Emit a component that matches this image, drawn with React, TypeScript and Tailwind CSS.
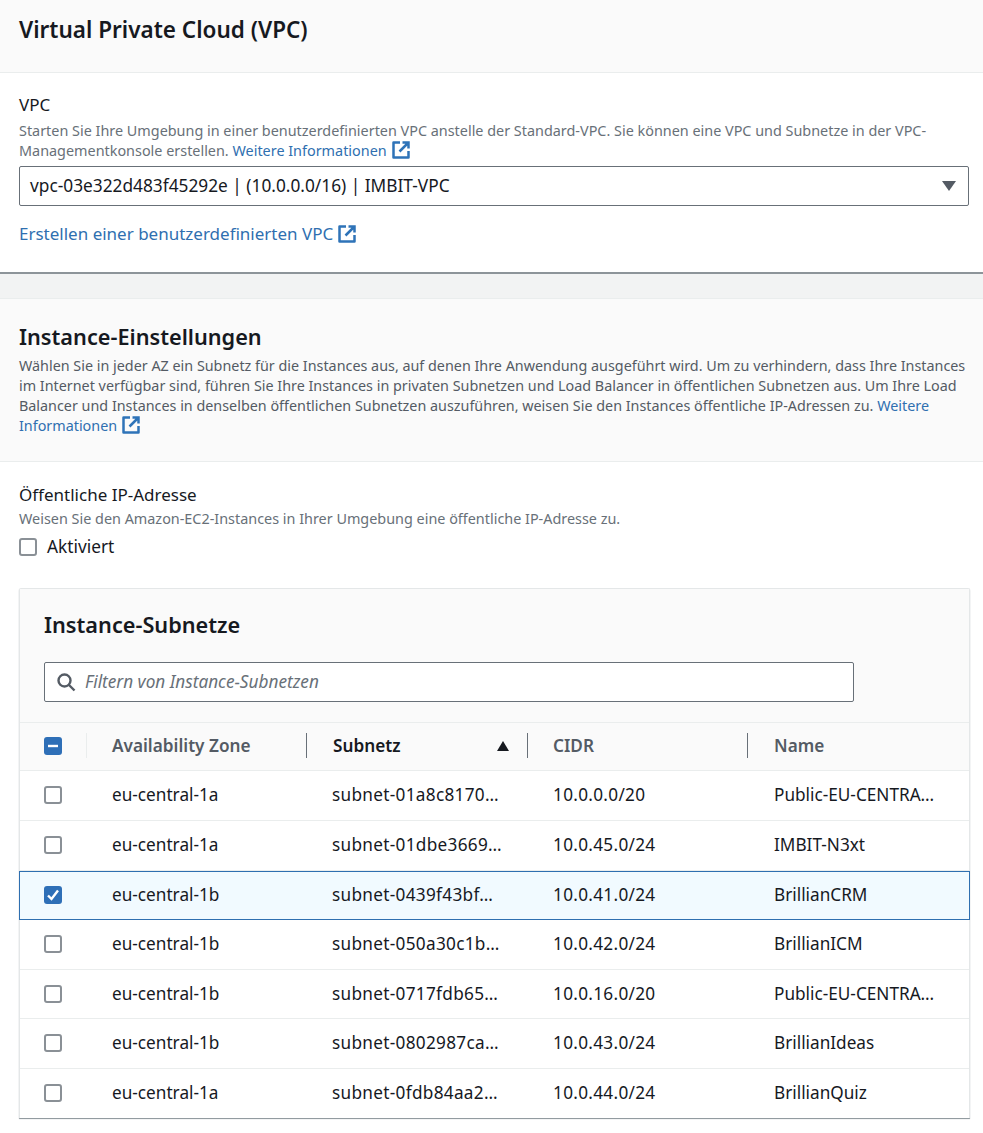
import React from "react";

const ExternalIcon: React.FC<{ size?: number }> = ({ size = 18 }) => (
    <svg width={size} height={size} viewBox="0 0 18 18" fill="none" stroke="#2e73b8" strokeWidth="2.5" className="inline-block align-[-3px] ml-[5px]">
        <path d="M8 1.5H1.5v15h15V10" strokeLinejoin="round" />
        <path d="M10.5 1.5h6V7.5M16.5 1.5 7.5 10.5" />
    </svg>
);

const Checkbox: React.FC<{ state?: "off" | "on" | "mixed" }> = ({ state = "off" }) => {
    if (state === "off") {
        return <span className="block w-[18px] h-[18px] rounded-[3px] border-2 border-[#8a9096] bg-white"></span>;
    }
    return (
        <span className="flex items-center justify-center w-[18px] h-[18px] rounded-[3px] bg-[#2e6fb7]">
            <svg width="18" height="18" viewBox="0 0 18 18" fill="none" stroke="#fff" strokeWidth="2.4">
                {state === "on" ? <path d="M4 9.5 7.5 13 14 4.5" /> : <path d="M4 9h10" />}
            </svg>
        </span>
    );
};

const rows = [
    { zone: "eu-central-1a", subnet: "subnet-01a8c8170…", cidr: "10.0.0.0/20", name: "Public-EU-CENTRA…", height: "h-[50px]" },
    { zone: "eu-central-1a", subnet: "subnet-01dbe3669…", cidr: "10.0.45.0/24", name: "IMBIT-N3xt", height: "h-[50px]" },
    { zone: "eu-central-1b", subnet: "subnet-0439f43bf…", cidr: "10.0.41.0/24", name: "BrillianCRM", height: "h-[49px]", selected: true },
    { zone: "eu-central-1b", subnet: "subnet-050a30c1b…", cidr: "10.0.42.0/24", name: "BrillianICM", height: "h-[50px]" },
    { zone: "eu-central-1b", subnet: "subnet-0717fdb65…", cidr: "10.0.16.0/20", name: "Public-EU-CENTRA…", height: "h-[49px]" },
    { zone: "eu-central-1b", subnet: "subnet-0802987ca…", cidr: "10.0.43.0/24", name: "BrillianIdeas", height: "h-[50px]" },
    { zone: "eu-central-1a", subnet: "subnet-0fdb84aa2…", cidr: "10.0.44.0/24", name: "BrillianQuiz", height: "h-[49px]" },
];

const App: React.FC = () => {
    return (
        <div className="w-[983px] h-[1133px] overflow-hidden bg-white text-[#16191f] font-['Noto_Sans',sans-serif]">
            <div className="h-[73px] bg-[#fafafa] border-b border-[#eaeded] px-[19px] pt-[15px]">
                <h2 className="text-[22.5px] leading-[30px] font-semibold">Virtual Private Cloud (VPC)</h2>
            </div>

            <div className="h-[201px] border-b-2 border-[#8d9499] pl-[19px] pr-[14px] pt-[21px]">
                <div className="text-[17px] leading-[22px]">VPC</div>
                <p className="text-[14.4px] leading-[20px] mt-[5px] text-[#687078]">
                    Starten Sie Ihre Umgebung in einer benutzerdefinierten VPC anstelle der Standard-VPC. Sie können eine VPC und Subnetze in der VPC-Managementkonsole erstellen. <span className="text-[#2f6fb0]">Weitere Informationen</span><ExternalIcon />
                </p>
                <div className="flex items-center justify-between h-[40px] mt-[5px] pl-[10px] pr-[12px] border border-[#687078] rounded-[2px] text-[17.3px]">
                    <span>vpc-03e322d483f45292e | (10.0.0.0/16) | IMBIT-VPC</span>
                    <span className="w-0 h-0 border-x-[7px] border-x-transparent border-t-[10px] border-t-[#545b64]"></span>
                </div>
                <div className="mt-[16px] text-[17px] leading-[24px] text-[#2f6fb0]">
                    Erstellen einer benutzerdefinierten VPC<ExternalIcon />
                </div>
            </div>

            <div className="h-[25px] bg-[#f2f3f3] border-b border-[#eaeded]"></div>

            <div className="h-[163px] bg-[#fafafa] border-b border-[#eaeded] pl-[19px] pr-[14px] pt-[23px]">
                <h2 className="text-[21.7px] leading-[30px] font-semibold">Instance-Einstellungen</h2>
                <p className="text-[14.35px] leading-[20px] mt-[4px] text-[#545b64]">
                    Wählen Sie in jeder AZ ein Subnetz für die Instances aus, auf denen Ihre Anwendung ausgeführt wird. Um zu verhindern, dass Ihre Instances im Internet verfügbar sind, führen Sie Ihre Instances in privaten Subnetzen und Load Balancer in öffentlichen Subnetzen aus. Um Ihre Load Balancer und Instances in denselben öffentlichen Subnetzen auszuführen, weisen Sie den Instances öffentliche IP-Adressen zu. <span className="text-[#2f6fb0]">Weitere Informationen</span><ExternalIcon />
                </p>
            </div>

            <div className="px-[19px] pt-[22px]">
                <div className="text-[17px] leading-[22px]">Öffentliche IP-Adresse</div>
                <p className="text-[14.4px] leading-[20px] mt-[3px] text-[#687078]">Weisen Sie den Amazon-EC2-Instances in Ihrer Umgebung eine öffentliche IP-Adresse zu.</p>
                <label className="flex items-center gap-[10px] mt-[6px] h-[24px] text-[17.3px]">
                    <Checkbox />
                    Aktiviert
                </label>

                <div className="mt-[29px] w-[951px] border-l border-r border-[#e4e7e8] shadow-[0_1px_1px_#879196] border-t rounded-t-[2px]">
                    <div className="h-[134px] bg-[#fafafa] border-b border-[#eaeded] px-[24px] pt-[21px]">
                        <h3 className="text-[21.7px] leading-[30px] font-semibold">Instance-Subnetze</h3>
                        <div className="flex items-center w-[810px] h-[40px] mt-[22px] pl-[11px] border border-[#687078] rounded-[2px] bg-white">
                            <svg width="20" height="20" viewBox="0 0 20 20" fill="none" stroke="#545b64" strokeWidth="2.4">
                                <circle cx="8.5" cy="8.5" r="6" />
                                <path d="M13 13l5.5 5.5" />
                            </svg>
                            <span className="ml-[9px] text-[17.2px] italic text-[#687078]">Filtern von Instance-Subnetzen</span>
                        </div>
                    </div>

                    <div className="flex h-[48px] pb-[2px] items-center bg-[#fafafa] border-b border-[#eaeded] text-[17.2px] font-semibold text-[#545b64]">
                        <div className="flex items-center w-[67px] h-[25px] pl-[24px] border-r border-[#eaeded]">
                            <Checkbox state="mixed" />
                        </div>
                        <div className="flex items-center w-[220px] h-[25px] pl-[25px] border-r border-[#687078]">Availability Zone</div>
                        <div className="flex items-center justify-between w-[221px] h-[25px] pl-[26px] pr-[18px] border-r border-[#687078] text-[#16191f]">
                            Subnetz
                            <span className="w-0 h-0 border-x-[6.5px] border-x-transparent border-b-[10px] border-b-[#16191f]"></span>
                        </div>
                        <div className="flex items-center w-[220px] h-[25px] pl-[25px] border-r border-[#687078]">CIDR</div>
                        <div className="pl-[26px]">Name</div>
                    </div>

                    {rows.map((row) => (
                        <div
                            key={row.subnet}
                            className={
                                row.selected
                                    ? "flex items-center h-[49px] pb-[1px] bg-[#f1faff] border border-[#2e6fb0] -mx-[1px] text-[17.2px]"
                                    : `flex items-center ${row.height} pb-[1px] border-b border-[#eaeded] last:border-b-0 text-[17.2px]`
                            }
                        >
                            <div className="w-[92px] pl-[24px] shrink-0">
                                <Checkbox state={row.selected ? "on" : "off"} />
                            </div>
                            <div className="w-[220px] shrink-0">{row.zone}</div>
                            <div className="w-[221px] shrink-0 tracking-[0.3px]">{row.subnet}</div>
                            <div className="w-[221px] shrink-0 tracking-[0.3px]">{row.cidr}</div>
                            <div className="whitespace-nowrap">{row.name}</div>
                        </div>
                    ))}
                </div>
            </div>
        </div>
    );
};

export default App;
